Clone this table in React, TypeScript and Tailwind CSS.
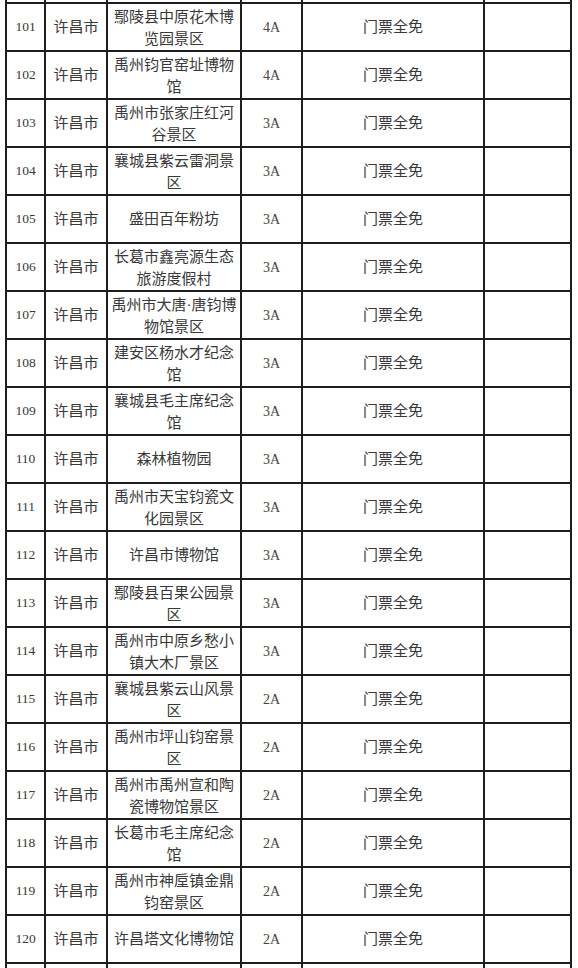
import React from "react";

interface Row {
  no: number;
  city: string;
  name: string[];
  grade: string;
  policy: string;
}

const rows: Row[] = [
  { no: 101, city: "许昌市", name: ["鄢陵县中原花木博", "览园景区"], grade: "4A", policy: "门票全免" },
  { no: 102, city: "许昌市", name: ["禹州钧官窑址博物", "馆"], grade: "4A", policy: "门票全免" },
  { no: 103, city: "许昌市", name: ["禹州市张家庄红河", "谷景区"], grade: "3A", policy: "门票全免" },
  { no: 104, city: "许昌市", name: ["襄城县紫云雷洞景", "区"], grade: "3A", policy: "门票全免" },
  { no: 105, city: "许昌市", name: ["盛田百年粉坊"], grade: "3A", policy: "门票全免" },
  { no: 106, city: "许昌市", name: ["长葛市鑫亮源生态", "旅游度假村"], grade: "3A", policy: "门票全免" },
  { no: 107, city: "许昌市", name: ["禹州市大唐·唐钧博", "物馆景区"], grade: "3A", policy: "门票全免" },
  { no: 108, city: "许昌市", name: ["建安区杨水才纪念", "馆"], grade: "3A", policy: "门票全免" },
  { no: 109, city: "许昌市", name: ["襄城县毛主席纪念", "馆"], grade: "3A", policy: "门票全免" },
  { no: 110, city: "许昌市", name: ["森林植物园"], grade: "3A", policy: "门票全免" },
  { no: 111, city: "许昌市", name: ["禹州市天宝钧瓷文", "化园景区"], grade: "3A", policy: "门票全免" },
  { no: 112, city: "许昌市", name: ["许昌市博物馆"], grade: "3A", policy: "门票全免" },
  { no: 113, city: "许昌市", name: ["鄢陵县百果公园景", "区"], grade: "3A", policy: "门票全免" },
  { no: 114, city: "许昌市", name: ["禹州市中原乡愁小", "镇大木厂景区"], grade: "3A", policy: "门票全免" },
  { no: 115, city: "许昌市", name: ["襄城县紫云山风景", "区"], grade: "2A", policy: "门票全免" },
  { no: 116, city: "许昌市", name: ["禹州市坪山钧窑景", "区"], grade: "2A", policy: "门票全免" },
  { no: 117, city: "许昌市", name: ["禹州市禹州宣和陶", "瓷博物馆景区"], grade: "2A", policy: "门票全免" },
  { no: 118, city: "许昌市", name: ["长葛市毛主席纪念", "馆"], grade: "2A", policy: "门票全免" },
  { no: 119, city: "许昌市", name: ["禹州市神垕镇金鼎", "钧窑景区"], grade: "2A", policy: "门票全免" },
  { no: 120, city: "许昌市", name: ["许昌塔文化博物馆"], grade: "2A", policy: "门票全免" },
];

const cell = "bg-white h-[46px] overflow-hidden flex items-center justify-center text-center";

// empty cells of the rows cut off at the top and bottom edges
const Stub = ({ h }: { h: string }) => (
  <>
    {Array.from({ length: 6 }).map((_, i) => (
      <div key={i} className={`bg-white ${h}`} />
    ))}
  </>
);

export default function App() {
  return (
    <div
      className="w-[578px] h-[968px] bg-white overflow-hidden text-[#383838]"
      style={{ fontFamily: '"Liberation Serif", "Noto Sans CJK SC", serif' }}
    >
      <div className="ml-[5px] w-[567px] grid grid-cols-[37px_60px_132px_59px_180px_85px] gap-[2px] px-[2px] bg-[#1e1e1e]">
        <Stub h="h-[2px]" />
        {rows.map((r) => (
          <React.Fragment key={r.no}>
            <div className={`${cell} text-[13.5px]`}>{r.no}</div>
            <div className={`${cell} text-[15px]`}>{r.city}</div>
            <div
              className={`bg-white h-[46px] overflow-hidden flex justify-center text-center text-[15px] leading-[22px] ${
                r.name.length > 1 ? "items-start pt-[2px]" : "items-center"
              }`}
            >
              <div>
                {r.name.map((line, i) => (
                  <div key={i}>{line}</div>
                ))}
              </div>
            </div>
            <div className={`${cell} text-[14px] text-[#444]`}>{r.grade}</div>
            <div className={`${cell} text-[15px]`}>{r.policy}</div>
            <div className={cell} />
          </React.Fragment>
        ))}
        <Stub h="h-[10px]" />
      </div>
    </div>
  );
}
